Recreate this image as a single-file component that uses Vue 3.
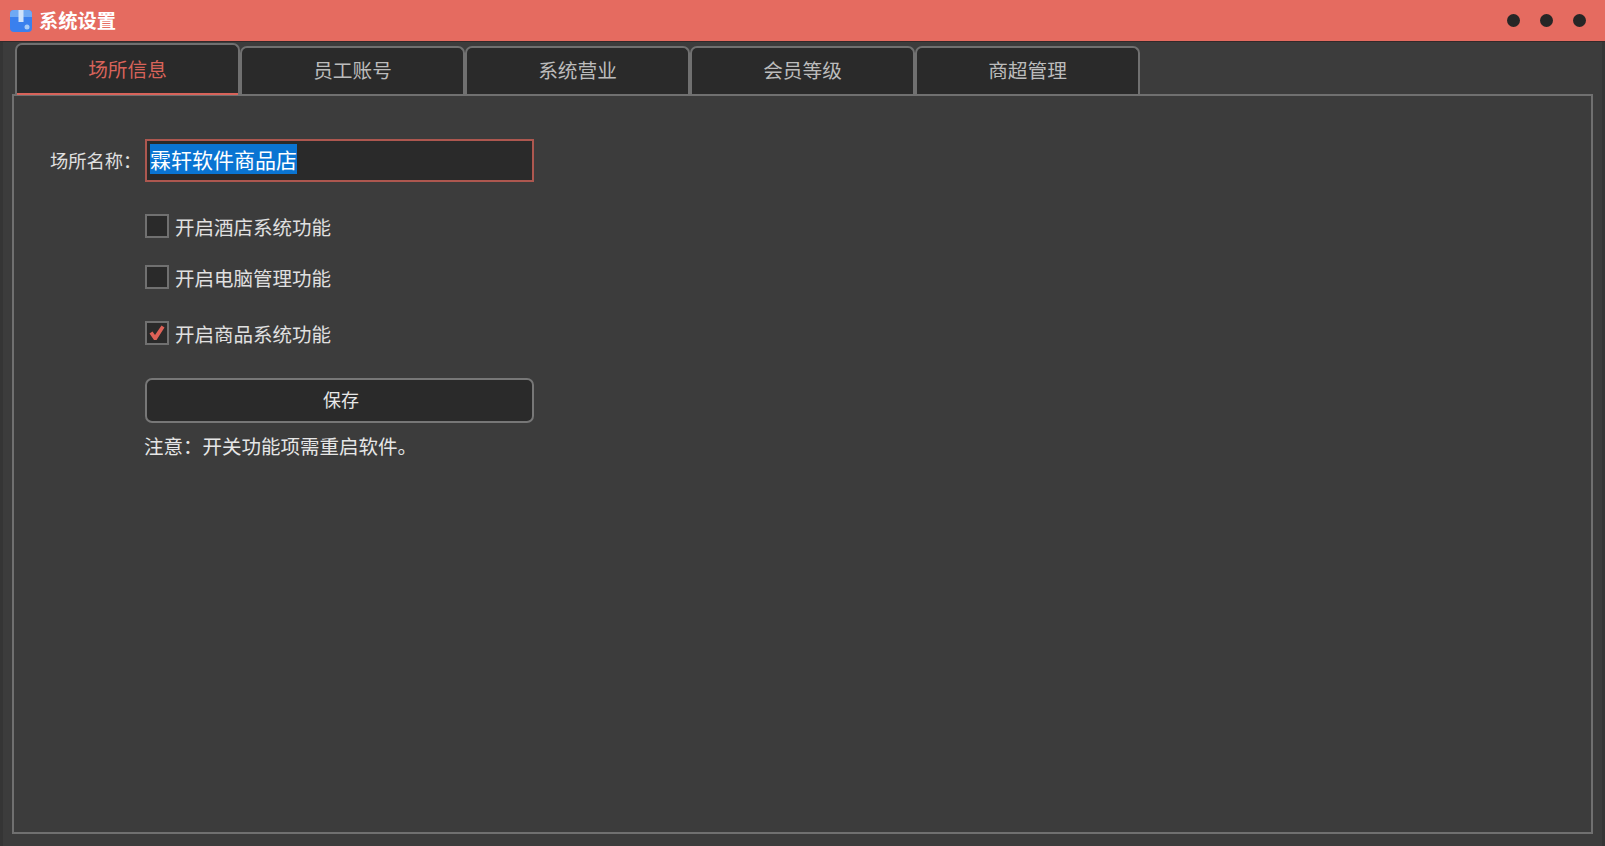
<template>
  <div class="window">
    <header class="titlebar">
      <svg class="logo" viewBox="0 0 24 24" width="24" height="24">
        <rect x="1" y="1" width="22" height="22" rx="4" fill="#3a80ee"/>
        <path d="M1 8V5a4 4 0 0 1 4-4h14a4 4 0 0 1 4 4v3z" fill="#6fa9f3"/>
        <rect x="9.5" y="1" width="5" height="12" fill="#cfe2fa"/>
        <circle cx="18" cy="18" r="2.5" fill="#a9ccf7"/>
      </svg>
      <span class="title">系统设置</span>
      <div class="dots"><i></i><i></i><i></i></div>
    </header>
    <main class="body">
      <nav class="tabs">
        <div v-for="(t, i) in tabs" :key="t" class="tab" :class="{ active: i === 0 }">{{ t }}</div>
      </nav>
      <section class="panel">
        <div class="name-row">
          <label class="name-label">场所名称&#xFF1A;</label>
          <div class="input"><span class="sel">霖轩软件商品店</span></div>
        </div>
        <div class="form">
          <div v-for="c in checks" :key="c.text" class="check" :style="{ marginTop: c.gap + 'px' }">
            <span class="box">
              <svg v-if="c.on" viewBox="0 0 20 20" width="20" height="20"><path d="M2.5 10.5L5.5 8.5L8 12L14.5 2.5L17.5 4.5L9.5 17H7z" fill="#de6157"/></svg>
            </span>
            <span class="check-text">{{ c.text }}</span>
          </div>
          <button class="save">保存</button>
          <p class="note">注意&#xFF1A;开关功能项需重启软件。</p>
        </div>
      </section>
    </main>
  </div>
</template>

<script setup>
const tabs = ['场所信息', '员工账号', '系统营业', '会员等级', '商超管理']
const checks = [
  { text: '开启酒店系统功能', on: false, gap: 0 },
  { text: '开启电脑管理功能', on: false, gap: 27 },
  { text: '开启商品系统功能', on: true, gap: 32 }
]
</script>

<style>
html, body { margin: 0; background: #3c3c3c; overflow: hidden; }
</style>

<style scoped>
.window {
  width: 1605px;
  height: 846px;
  background: #3c3c3c;
  font-family: "Noto Sans CJK SC", "Noto Sans", sans-serif;
  color: #e6e6e6;
  display: flex;
  flex-direction: column;
  box-sizing: border-box;
}
.titlebar {
  height: 41px;
  flex: none;
  background: #e56b60;
  border-bottom: 1px solid #33292a;
  display: flex;
  align-items: center;
  padding: 0 19px 0 9px;
}
.logo { flex: none; }
.title { margin-left: 6px; padding-bottom: 2px; font-size: 19.3px; font-weight: 700; color: #fff; }
.dots { margin-left: auto; display: flex; gap: 20px; }
.dots i { width: 13px; height: 13px; border-radius: 50%; background: #262626; }
.body {
  flex: 1;
  padding: 0 9px 12px;
  display: flex;
  flex-direction: column;
  border-left: 3px solid #353535;
  border-right: 3px solid #353535;
  min-height: 0;
}
.tabs { display: flex; align-items: flex-end; padding-left: 3px; height: 52px; flex: none; }
.tab {
  width: 225px;
  height: 48px;
  box-sizing: border-box;
  background: #2a2a2a;
  border: 2px solid #707070;
  border-bottom: none;
  border-radius: 7px 7px 0 0;
  display: flex;
  align-items: center;
  justify-content: center;
  padding-bottom: 4px;
  font-size: 19.7px;
  color: #bcbcbc;
}
.tab.active {
  height: 52px;
  padding-bottom: 4px;
  color: #d8635a;
  box-shadow: inset 0 -2px 0 #d8635a;
  margin-bottom: -1px;
  position: relative;
  z-index: 1;
}
.panel {
  flex: 1;
  border: 2px solid #707070;
  display: flex;
  flex-direction: column;
  padding: 43px 0 0 36px;
}
.name-row { display: flex; align-items: center; height: 43px; }
.name-label { width: 95px; padding-bottom: 2px; font-size: 18.3px; color: #e0e0e0; white-space: nowrap; }
.input {
  width: 389px;
  height: 43px;
  box-sizing: border-box;
  background: #2a2a2a;
  border: 2px solid #ad574f;
  display: flex;
  align-items: center;
  padding: 0 0 4px 3px;
}
.sel { background: #0a74d2; color: #fff; font-size: 21px; line-height: 30px; }
.form { margin-left: 95px; margin-top: 32px; display: flex; flex-direction: column; width: 389px; }
.check { display: flex; align-items: center; height: 24px; }
.box {
  width: 24px;
  height: 24px;
  box-sizing: border-box;
  background: #2a2a2a;
  border: 2px solid #707070;
  display: flex;
  align-items: center;
  justify-content: center;
}
.check-text { margin-left: 6px; font-size: 19.5px; color: #e0e0e0; }
.save {
  margin-top: 33px;
  height: 45px;
  background: #2a2a2a;
  border: 2px solid #777;
  border-radius: 7px;
  font: inherit;
  font-size: 18px;
  color: #e6e6e6;
  padding: 0 0 3px 3px;
}
.note { margin: 9px 0 0 -1px; font-size: 19.5px; line-height: 28px; color: #e6e6e6; }
</style>
